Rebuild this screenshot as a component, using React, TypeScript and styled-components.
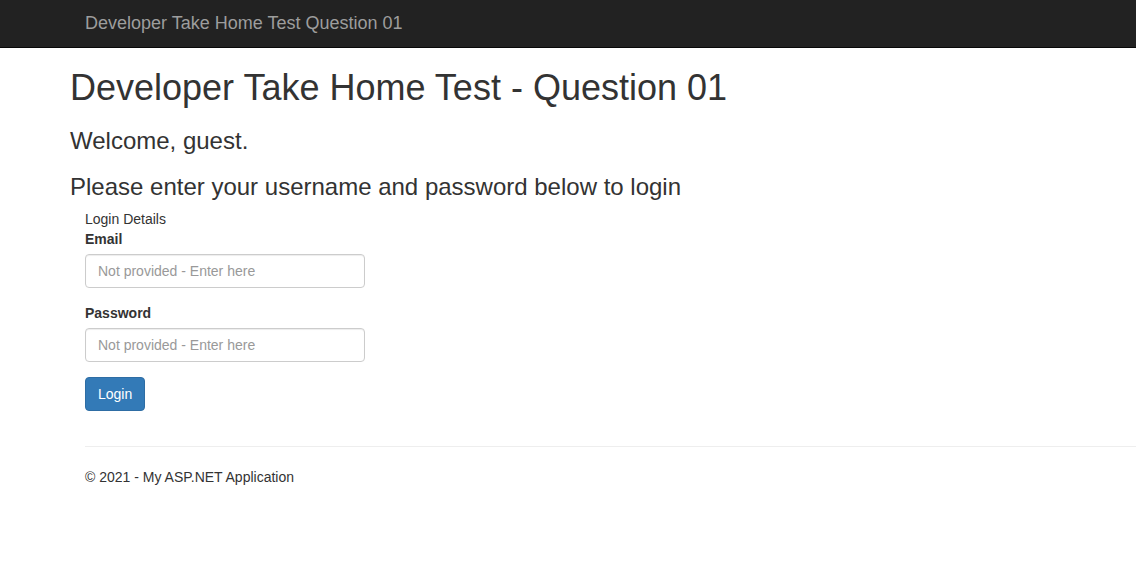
import React from "react";
import styled, { createGlobalStyle } from "styled-components";

const GlobalStyle = createGlobalStyle`
  html, body {
    margin: 0;
    padding: 0;
    background: #ffffff;
  }
  body {
    font-family: "Liberation Sans", Arial, Helvetica, sans-serif;
    font-size: 14px;
    line-height: 1.42857143;
    color: #333333;
  }
  * { box-sizing: border-box; }
`;

const Navbar = styled.header`
  height: 48px;
  background: #222222;
  border-bottom: 1px solid #080808;
  display: flex;
  align-items: flex-start;
  padding-left: 85px;
`;

const Brand = styled.a`
  display: block;
  padding-top: 13px;
  font-size: 18px;
  line-height: 20px;
  color: #9d9d9d;
  text-decoration: none;
`;

const Main = styled.main`
  padding-left: 70px;
`;

const Title = styled.h1`
  margin: 20px 0 10px;
  font-size: 36px;
  font-weight: 500;
  line-height: 1.1;
  color: #333333;
`;

const Subtitle = styled.h3`
  margin: 20px 0 10px;
  font-size: 24px;
  font-weight: 500;
  line-height: 1.1;
  color: #333333;
`;

const LoginForm = styled.form`
  padding-left: 15px;
`;

const Legend = styled.div`
  font-size: 14px;
  line-height: 19px;
`;

const FormGroup = styled.div`
  margin-bottom: 15px;
`;

const Label = styled.label`
  display: inline-block;
  margin-bottom: 5px;
  font-weight: 700;
  line-height: 20px;
`;

const Input = styled.input`
  display: block;
  width: 280px;
  height: 34px;
  padding: 6px 12px;
  font-family: inherit;
  font-size: 14px;
  line-height: 1.42857143;
  color: #555555;
  background: #ffffff;
  border: 1px solid #cccccc;
  border-radius: 4px;
  box-shadow: inset 0 1px 1px rgba(0, 0, 0, 0.075);
  outline: none;
  &::placeholder {
    color: #999999;
    opacity: 1;
  }
`;

const Button = styled.button`
  display: inline-block;
  height: 34px;
  padding: 6px 12px;
  font-family: inherit;
  font-size: 14px;
  line-height: 1.42857143;
  color: #ffffff;
  background: #337ab7;
  border: 1px solid #2e6da4;
  border-radius: 4px;
  cursor: pointer;
`;

const Footer = styled.footer`
  padding-left: 15px;
  margin-top: 35px;
`;

const Rule = styled.hr`
  margin: 0 0 20px;
  border: 0;
  border-top: 1px solid #eeeeee;
`;

const FooterText = styled.p`
  margin: 0 0 10px;
`;

export default function App() {
  return (
    <>
      <GlobalStyle />
      <Navbar>
        <Brand href="#">Developer Take Home Test Question 01</Brand>
      </Navbar>
      <Main>
        <Title>Developer Take Home Test - Question 01</Title>
        <Subtitle>Welcome, guest.</Subtitle>
        <Subtitle>Please enter your username and password below to login</Subtitle>
        <LoginForm onSubmit={(e) => e.preventDefault()}>
          <Legend>Login Details</Legend>
          <FormGroup>
            <Label htmlFor="email">Email</Label>
            <Input id="email" type="text" placeholder="Not provided - Enter here" />
          </FormGroup>
          <FormGroup>
            <Label htmlFor="password">Password</Label>
            <Input id="password" type="password" placeholder="Not provided - Enter here" />
          </FormGroup>
          <Button type="submit">Login</Button>
        </LoginForm>
        <Footer>
          <Rule />
          <FooterText>© 2021 - My ASP.NET Application</FooterText>
        </Footer>
      </Main>
    </>
  );
}
